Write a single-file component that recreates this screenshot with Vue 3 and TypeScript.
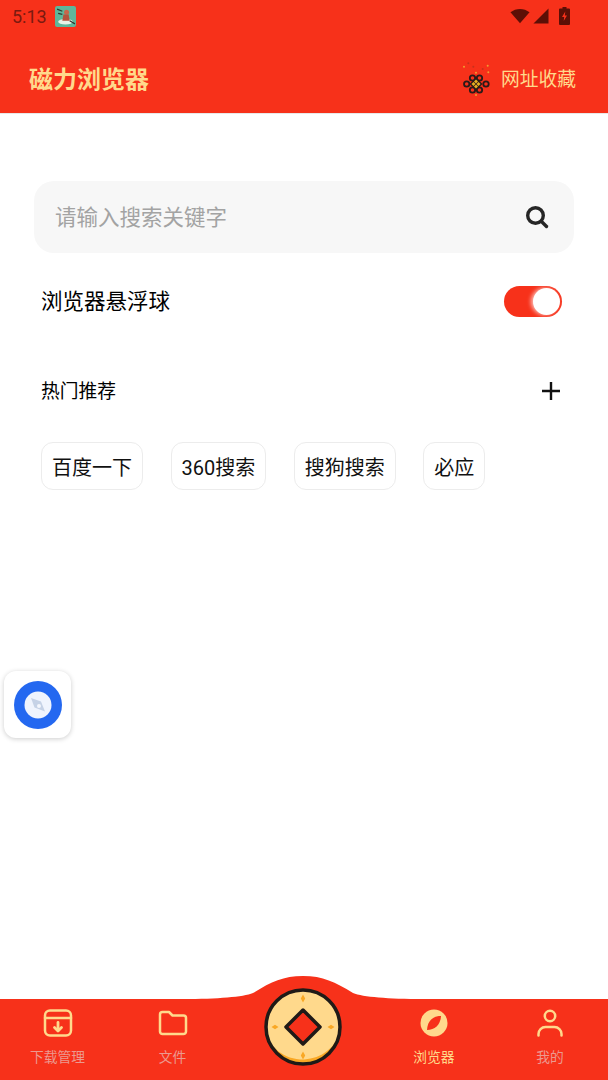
<template>
  <div class="page">
    <header class="header">
      <div class="status">
        <span class="time">5:13</span>
        <svg class="notif" width="21" height="21" viewBox="0 0 20 20">
          <rect width="20" height="20" rx="2" fill="#5fb69a" />
          <ellipse cx="10" cy="15" rx="7" ry="2.6" fill="#e8f3e6" />
          <circle cx="11" cy="6" r="2.4" fill="#c9654a" />
          <path d="M8 8l5 0 1 6-7 0z" fill="#b5523c" />
          <path d="M2 3l5 2M14 14l5 3M3 7l4 1" stroke="#2f3a30" stroke-width="1.2" />
        </svg>
        <div class="status-right">
          <svg class="wifi" width="20" height="16" viewBox="0 0 22 17">
            <path d="M0.5 4.5C6.5 -0.6 15.500 -0.600 21.500 4.500L11 16.500z" fill="#5c0f06" />
          </svg>
          <svg class="signal" width="16" height="16" viewBox="0 0 17 17">
            <path d="M16.500 0.500V16.500H0.500z" fill="#5c0f06" />
          </svg>
          <svg width="11" height="18" viewBox="0 0 11 18">
            <path d="M3.500 0h4v1.500H10a1 1 0 0 1 1 1V17a1 1 0 0 1-1 1H1a1 1 0 0 1-1-1V2.500a1 1 0 0 1 1-1h2.500z" fill="#5c0f06" />
            <path d="M6.300 4.500L3 10h2.200l-.5 4L8 8.500H5.800z" fill="#f7311a" />
          </svg>
        </div>
      </div>
      <div class="toolbar">
        <h1 class="title">磁力浏览器</h1>
        <div class="fav">
          <svg class="knot" width="28" height="36" viewBox="0 0 28 36">
            <g fill="#f0a030">
              <circle cx="2" cy="4.700" r="1" />
              <circle cx="25.700" cy="3.700" r="1" />
              <circle cx="26.300" cy="10.300" r="1" />
              <circle cx="14" cy="10.700" r="1" />
              <circle cx="14" cy="33" r="1" />
            </g>
            <g fill="#c8301c">
              <circle cx="6.300" cy="1.300" r="1" />
              <circle cx="11.300" cy="4.700" r="1" />
              <circle cx="20.700" cy="7" r="1" />
            </g>
            <g fill="none" stroke="#2b1a18" stroke-width="1.800">
              <circle cx="4.700" cy="22" r="2.700" />
              <circle cx="24" cy="22" r="2.700" />
              <circle cx="10.500" cy="16" r="2.700" />
              <circle cx="17.500" cy="16" r="2.700" />
              <circle cx="10.500" cy="28" r="2.700" />
              <circle cx="17.500" cy="28" r="2.700" />
            </g>
            <path d="M14 15.500l6.500 6.500-6.500 6.500-6.500-6.500z" fill="#2b1a18" />
            <g fill="#e8b020">
              <path d="M14 17.500l2 2-2 2-2-2z" />
              <path d="M14 22.500l2 2-2 2-2-2z" />
              <path d="M11.500 20l2 2-2 2-2-2z" />
              <path d="M16.500 20l2 2-2 2-2-2z" />
            </g>
          </svg>
          <span>网址收藏</span>
        </div>
      </div>
    </header>

    <main class="content">
      <div class="search">
        <span class="placeholder">请输入搜索关键字</span>
        <svg width="24" height="24" viewBox="0 0 24 24" fill="none" stroke="#262626" stroke-width="3.400" stroke-linecap="round">
          <circle cx="10.500" cy="10.500" r="7.800" />
          <path d="M16.500 16.500L21.500 21.500" />
        </svg>
      </div>

      <div class="row switch-row">
        <span class="row-text">浏览器悬浮球</span>
        <div class="switch"><div class="thumb"></div></div>
      </div>

      <div class="row hot-row">
        <span class="row-text">热门推荐</span>
        <svg width="20" height="20" viewBox="0 0 20 20" stroke="#111" stroke-width="2.400">
          <path d="M10 1v18M1 10h18" />
        </svg>
      </div>

      <div class="chips">
        <div v-for="chip in chips" :key="chip" class="chip">{{ chip }}</div>
      </div>
    </main>

    <div class="float-ball">
      <svg width="48" height="48" viewBox="0 0 48 48">
        <circle cx="24" cy="24" r="24" fill="#2468f0" />
        <circle cx="24" cy="24" r="13.500" fill="#f0f4fd" />
        <path d="M17 17l10 3.500 4 10-10.500-4z" fill="#c6d2e6" />
        <circle cx="25" cy="25" r="2" fill="#f4f6fc" />
      </svg>
    </div>

    <nav class="tabbar">
      <svg class="hump" width="240" height="24" viewBox="0 0 240 24">
        <path d="M0 24C35 24 60 22 70 18 88 7 100 1 120 1s32 6 50 17c10 4 35 6 70 6z" fill="#f7311a" />
      </svg>
      <div v-for="tab in tabs" :key="tab.label" class="tab" :class="{ active: tab.active, spacer: !tab.label }">
        <template v-if="tab.label">
          <svg width="30" height="30" viewBox="0 0 30 30" fill="none" stroke="#ffd98c" stroke-width="2.500" stroke-linecap="round" stroke-linejoin="round">
            <template v-if="tab.icon === 'box'">
              <rect x="2" y="2.500" width="26" height="25" rx="5" />
              <path d="M2 10h26" />
              <path d="M15 14.500v8" stroke-width="2.800" />
              <path d="M11.500 19.500L15 23l3.500-3.500" stroke-width="2.800" />
            </template>
            <path v-else-if="tab.icon === 'folder'" d="M2 6.500a2.500 2.500 0 0 1 2.500-2.500h6.500l3.500 3.500h11a2.500 2.500 0 0 1 2.500 2.500v13.500a2.500 2.500 0 0 1-2.500 2.500h-21a2.500 2.500 0 0 1-2.500-2.500z" />
            <template v-else-if="tab.icon === 'compass'">
              <circle cx="15" cy="15" r="13.500" fill="#ffd98c" stroke="none" />
              <path d="M22 8C14 8 8.500 12.500 8 22 15.500 22 21.500 17 22 8z" fill="#f7311a" stroke="none" />
            </template>
            <template v-else>
              <circle cx="15" cy="8" r="5.200" />
              <path d="M3.500 27.500v-1.500a7 7 0 0 1 7-7h9a7 7 0 0 1 7 7v1.500" />
            </template>
          </svg>
          <span class="tab-label">{{ tab.label }}</span>
        </template>
      </div>
      <svg class="coin" width="78" height="78" viewBox="0 0 78 78">
        <circle cx="39" cy="39" r="37" fill="#f9a825" />
        <path d="M2 39a37 37 0 0 1 74 0c0 2-.3 4-.8 6C70 63 53 72 36 71.500 17 70 2 56 2 39z" fill="#ffd98c" />
        <circle cx="39" cy="39" r="37" fill="none" stroke="#1f1a17" stroke-width="3.500" />
        <path d="M39 22L56 39 39 56 22 39z" fill="#f7311a" stroke="#1f1a17" stroke-width="3.500" stroke-linejoin="round" />
        <g fill="#f9a825">
          <path d="M39 6.500l2.200 4-2.200 4-2.200-4z" />
          <path d="M39 63.500l2.200 4-2.200 4-2.200-4z" />
          <path d="M7.500 39l3.500-2.200 3.500 2.200-3.500 2.200z" />
          <path d="M63.500 39l3.500-2.200 3.500 2.200-3.500 2.200z" />
        </g>
      </svg>
    </nav>
  </div>
</template>

<script setup lang="ts">
interface Tab {
  label: string;
  icon: string;
  active?: boolean;
}

const chips: string[] = ["百度一下", "360搜索", "搜狗搜索", "必应"];

const tabs: Tab[] = [
  { label: "下载管理", icon: "box" },
  { label: "文件", icon: "folder" },
  { label: "", icon: "" },
  { label: "浏览器", icon: "compass", active: true },
  { label: "我的", icon: "user" },
];
</script>

<style>
html,
body {
  margin: 0;
  background: #fff;
}
</style>

<style scoped>
.page {
  position: relative;
  display: flex;
  flex-direction: column;
  width: 608px;
  height: 1080px;
  overflow: hidden;
  font-family: Roboto, "Noto Sans CJK SC", sans-serif;
  background: #fff;
}

.header {
  height: 113px;
  flex-shrink: 0;
  background: #f7311a;
  border-bottom: 1px solid #e8e8e8;
  box-sizing: content-box;
}

.status {
  display: flex;
  align-items: center;
  height: 32px;
  padding: 0 38px 0 12px;
}

.time {
  font-size: 18px;
  color: #7a1a10;
}

.notif {
  margin-left: 8px;
}

.status-right {
  display: flex;
  align-items: center;
  margin-left: auto;
}

.signal {
  margin: 0 10px 0 3px;
}

.toolbar {
  display: flex;
  align-items: center;
  justify-content: space-between;
  height: 81px;
  padding: 10px 32px 0 29px;
  box-sizing: border-box;
}

.title {
  margin: 0;
  font-size: 24px;
  font-weight: 700;
  color: #ffd98c;
}

.fav {
  display: flex;
  align-items: center;
  gap: 11px;
  font-size: 18.750px;
  color: #ffd98c;
}

.knot {
  margin-top: 5px;
}

.content {
  flex: 1;
  padding: 67px 34px 0;
}

.search {
  display: flex;
  align-items: center;
  justify-content: space-between;
  height: 72px;
  padding: 0 25px 0 21px;
  border-radius: 20px;
  background: #f7f7f7;
}

.placeholder {
  margin-bottom: 4px;
  font-size: 21.500px;
  color: #a3a3a3;
}

.row {
  display: flex;
  align-items: center;
  justify-content: space-between;
  color: #000;
}

.row-text {
  margin-bottom: 4px;
}

.switch-row {
  height: 48px;
  margin-top: 24px;
  padding: 0 12px 0 7px;
  font-size: 21.500px;
}

.switch {
  display: flex;
  align-items: center;
  justify-content: flex-end;
  width: 58px;
  height: 31px;
  padding: 2px;
  box-sizing: border-box;
  border-radius: 16px;
  background: #f7311a;
}

.thumb {
  width: 27px;
  height: 27px;
  border-radius: 50%;
  background: #fff;
  box-shadow: -2px 0 4px rgba(255, 255, 255, 0.7);
}

.hot-row {
  height: 40px;
  margin-top: 46px;
  padding: 0 13px 0 7px;
  font-size: 18.750px;
}

.chips {
  display: flex;
  gap: 27.500px;
  margin-top: 31px;
  padding-left: 7px;
}

.chip {
  display: flex;
  align-items: center;
  height: 48px;
  padding: 0 10px;
  box-sizing: border-box;
  border: 1px solid #ececec;
  border-radius: 12px;
  font-size: 20px;
  color: #111;
}

.float-ball {
  position: absolute;
  left: 4px;
  top: 671px;
  display: flex;
  align-items: center;
  justify-content: center;
  width: 67px;
  height: 67px;
  border-radius: 12px;
  background: #fff;
  box-shadow: 0 1px 5px rgba(0, 0, 0, 0.2);
}

.tabbar {
  position: relative;
  display: grid;
  grid-template-columns: 115px 115px 146px 116px 116px;
  height: 81px;
  flex-shrink: 0;
  background: #f7311a;
}

.hump {
  position: absolute;
  left: 183px;
  top: -24px;
}

.coin {
  position: absolute;
  left: 264px;
  top: -11px;
}

.tab {
  display: flex;
  flex-direction: column;
  align-items: center;
  padding-top: 9px;
}

.tab-label {
  margin-top: 9px;
  font-size: 13.750px;
  line-height: 20px;
  color: #ec998f;
}

.tab.active .tab-label {
  color: #ffd98c;
}
</style>
